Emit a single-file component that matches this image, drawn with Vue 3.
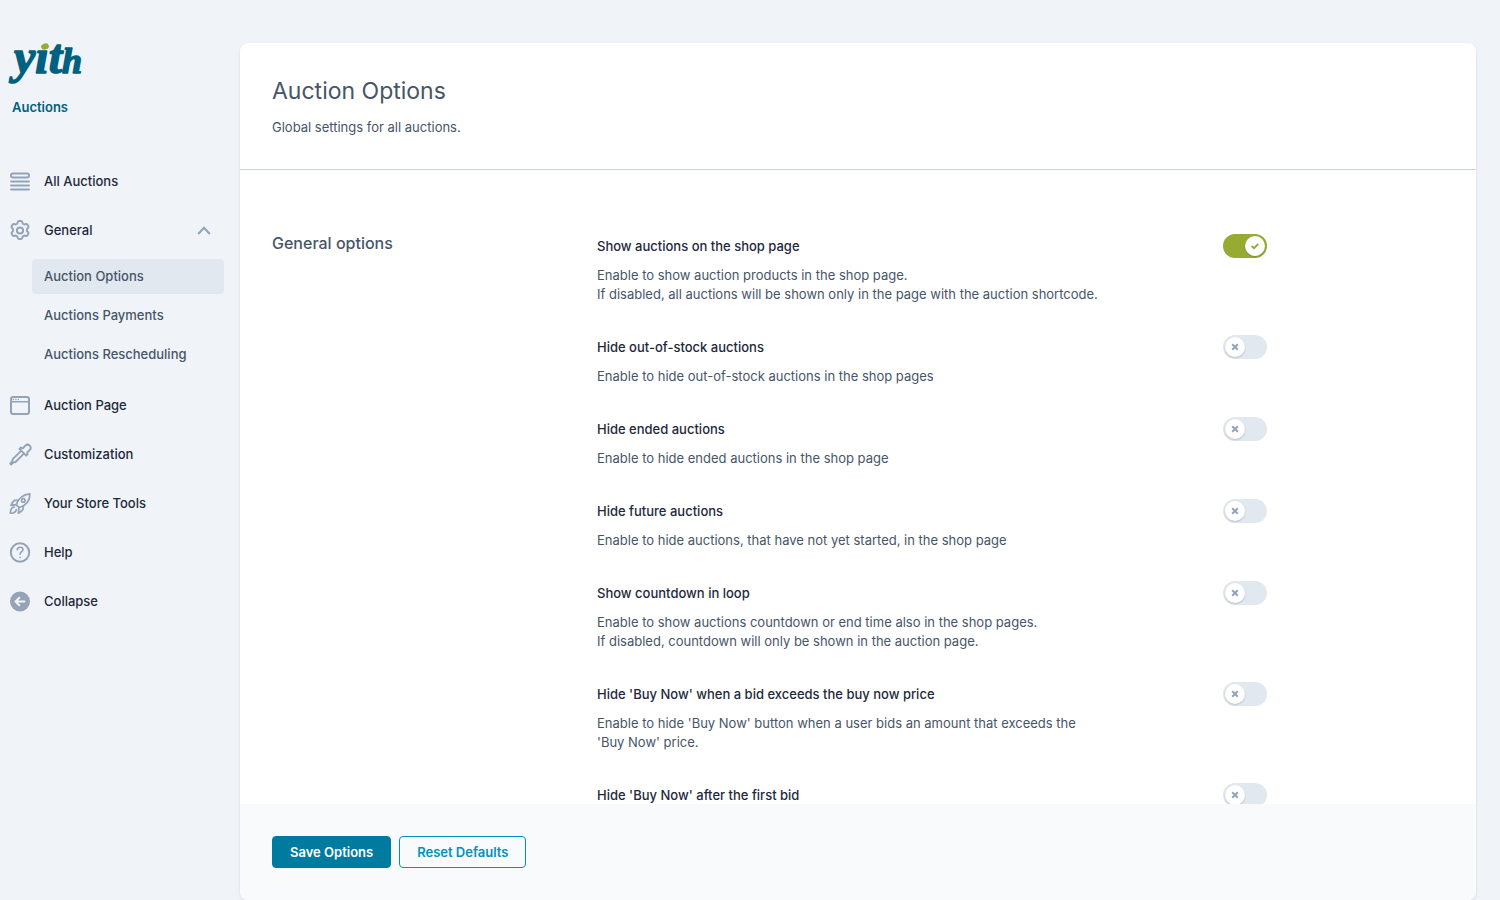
<script setup>
import { ref } from 'vue'

const generalOpen = ref(true)
const activeSub = ref('Auction Options')

const subItems = ['Auction Options', 'Auctions Payments', 'Auctions Rescheduling']

const menu = [
  { id: 'list', label: 'All Auctions' },
  { id: 'gear', label: 'General', children: subItems },
  { id: 'window', label: 'Auction Page' },
  { id: 'dropper', label: 'Customization' },
  { id: 'rocket', label: 'Your Store Tools' },
  { id: 'help', label: 'Help' },
  { id: 'collapse', label: 'Collapse' }
]

function defaults() {
  return [
    {
      id: 'show-shop',
      label: 'Show auctions on the shop page',
      lines: [
        'Enable to show auction products in the shop page.',
        'If disabled, all auctions will be shown only in the page with the auction shortcode.'
      ],
      on: true
    },
    {
      id: 'hide-stock',
      label: 'Hide out-of-stock auctions',
      lines: ['Enable to hide out-of-stock auctions in the shop pages'],
      on: false
    },
    {
      id: 'hide-ended',
      label: 'Hide ended auctions',
      lines: ['Enable to hide ended auctions in the shop page'],
      on: false
    },
    {
      id: 'hide-future',
      label: 'Hide future auctions',
      lines: ['Enable to hide auctions, that have not yet started, in the shop page'],
      on: false
    },
    {
      id: 'countdown',
      label: 'Show countdown in loop',
      lines: [
        'Enable to show auctions countdown or end time also in the shop pages.',
        'If disabled, countdown will only be shown in the auction page.'
      ],
      on: false
    },
    {
      id: 'buy-now-price',
      label: "Hide 'Buy Now' when a bid exceeds the buy now price",
      lines: ["Enable to hide 'Buy Now' button when a user bids an amount that exceeds the 'Buy Now' price."],
      on: false
    },
    {
      id: 'buy-now-first',
      label: "Hide 'Buy Now' after the first bid",
      lines: [],
      on: false
    }
  ]
}

const options = ref(defaults())

function resetDefaults() {
  options.value = defaults()
}
</script>

<template>
  <div class="page">
    <aside class="sidebar">
      <div class="brand">
        <svg class="logo" width="72" height="48" viewBox="0 0 72 48" role="img" aria-label="yith">
          <text class="wordmark" x="2" y="30">yıt<tspan class="small">h</tspan></text>
          <ellipse cx="33" cy="3.500" rx="4" ry="3" transform="rotate(-20 33 3.500)" fill="#97ab33" />
        </svg>
        <div class="product">Auctions</div>
      </div>

      <nav>
        <template v-for="item in menu" :key="item.id">
          <a
            class="item"
            href="#"
            :aria-expanded="item.children ? generalOpen : undefined"
            @click.prevent="item.children && (generalOpen = !generalOpen)"
          >
            <svg class="icon" width="24" height="24" viewBox="0 0.5 24 24" fill="none" stroke="#94a3b8" stroke-width="2" stroke-linecap="round" stroke-linejoin="round">
              <g v-if="item.id === 'list'">
                <rect x="3" y="4" width="18" height="4" rx="2" />
                <path d="M3 12h18M3 16h18M3 20h18" stroke-width="1.800" />
              </g>
              <g v-else-if="item.id === 'gear'">
                <path d="M9.6 3.9c.2-.9.7-1.3 1.4-1.3h2c.7 0 1.2.4 1.4 1.3l.3 1.2c.6.2 1.1.5 1.6.9l1.2-.4c.9-.3 1.5-.1 1.8.5l1 1.7c.4.7.2 1.3-.4 1.8l-.9.8v2.2l.9.8c.6.6.8 1.2.4 1.8l-1 1.7c-.3.6-.9.8-1.8.5l-1.2-.4c-.5.4-1 .7-1.6.9l-.3 1.2c-.2.9-.7 1.300-1.400 1.300h-2c-.7 0-1.200-.4-1.400-1.300l-.3-1.200c-.6-.2-1.100-.5-1.600-.9l-1.200.4c-.9.3-1.500.1-1.800-.5l-1-1.700c-.4-.7-.2-1.300.4-1.800l.9-.8v-2.200l-.9-.8c-.6-.5-.8-1.100-.4-1.800l1-1.700c.3-.6.9-.8 1.800-.5l1.200.4c.5-.4 1-.7 1.600-.9z" />
                <circle cx="12" cy="12" r="3.1" />
              </g>
              <g v-else-if="item.id === 'window'">
                <rect x="3" y="3.500" width="18" height="17" rx="2.200" />
                <path d="M3 8.200h18" stroke-width="1.600" />
                <path d="M5.300 5.900h.1M7.800 5.900h.1M10.300 5.900h.1" stroke-width="1.500" />
              </g>
              <g v-else-if="item.id === 'dropper'" stroke-width="1.900">
                <path d="M14 5.700l1.200-.2 2.200-2.300a3 3 0 0 1 4.300 4.300l-2.300 2.200-.2 1.200.5.800-1.500 1.500-6.800-6.800 1.500-1.500z" />
                <path d="M13.100 8.300l-8.400 8.400-.5 2.300-2 2.200 .9.900 2.100-2 2.300-.6 8.400-8.400" />
              </g>
              <g v-else-if="item.id === 'rocket'" stroke-width="1.700">
                <path d="M8.200 13.200c2-5.800 6.300-10.300 13.700-10.900.2 7.100-4.600 11.900-10.800 13.900z" />
                <path d="M9.800 8.800H6.700c-1.500 1.100-3 3-3.700 5.100l5.200-.7M15.300 14.300l-.1 3.200c-1.100 1.900-2.600 3.300-4.800 4.100l.7-5.400" />
                <circle cx="15.300" cy="8.900" r="1.700" />
                <path d="M6.300 15.700c-2.300-.2-3.800 2.200-4.100 6 2.900.2 5.500-.9 6.200-3.700" />
              </g>
              <g v-else-if="item.id === 'help'">
                <circle cx="12" cy="12" r="9.200" />
                <path d="M9.200 9.300c.2-1.700 1.300-2.600 2.900-2.600 1.700 0 2.900 1 2.900 2.500 0 1.900-2.900 2.200-2.900 4.500" stroke-width="1.600" />
                <circle cx="12.100" cy="16.900" r=".5" stroke-width="1" />
              </g>
              <g v-else>
                <circle cx="12" cy="12" r="10" fill="#94a3b8" stroke="none" />
                <path d="M16.500 12h-8.700M11.300 8.300L7.500 12l3.800 3.700" stroke="#f0f4f8" stroke-width="2" />
              </g>
            </svg>
            <span>{{ item.label }}</span>
            <svg v-if="item.children" class="chevron" :class="{ closed: !generalOpen }" width="14" height="14" viewBox="0 0 14 14" fill="none" stroke="#94a3b8" stroke-width="2.200">
              <path d="M1.200 10L7 3.800l5.800 6.200" />
            </svg>
          </a>
          <div v-if="item.children && generalOpen" class="submenu">
            <a
              v-for="sub in item.children"
              :key="sub"
              class="subitem"
              :class="{ active: sub === activeSub }"
              href="#"
              @click.prevent="activeSub = sub"
            >{{ sub }}</a>
          </div>
        </template>
      </nav>
    </aside>

    <main class="panel">
      <header class="panel-head">
        <h1>Auction Options</h1>
        <p>Global settings for all auctions.</p>
      </header>

      <form class="form" @submit.prevent>
        <div class="content">
          <h2>General options</h2>
          <div class="options">
            <div v-for="opt in options" :key="opt.id" class="option">
              <div class="option-row">
                <label :for="opt.id">{{ opt.label }}</label>
                <span class="switch">
                  <input :id="opt.id" v-model="opt.on" type="checkbox" role="switch" />
                  <svg class="knob" :class="{ on: opt.on }" width="20" height="20" viewBox="0 0 20 20" fill="none">
                    <path v-if="opt.on" d="M6.700 10l2.300 2.100 4.200-4.100" stroke="#97ab33" stroke-width="2" />
                    <path v-else d="M7.200 7.200l5.600 5.600M12.800 7.200l-5.600 5.600" stroke="#94a3b8" stroke-width="2" />
                  </svg>
                </span>
              </div>
              <div v-if="opt.lines.length" class="desc">
                <div v-for="line in opt.lines" :key="line">{{ line }}</div>
              </div>
            </div>
          </div>
        </div>

        <footer class="actions">
          <button class="btn primary" type="submit">Save Options</button>
          <button class="btn" type="button" @click="resetDefaults">Reset Defaults</button>
        </footer>
      </form>
    </main>
  </div>
</template>

<style>
body {
  background: #f0f4f8;
}
</style>

<style scoped>
* {
  box-sizing: border-box;
}
.page {
  display: flex;
  height: 100vh;
  padding: 43px 24px 0 0;
  overflow: hidden;
  background: #f0f4f8;
  color: #475569;
  font-family: Inter, sans-serif;
  font-size: 13px;
  line-height: 19px;
}
.sidebar {
  flex: 0 0 240px;
}
.brand {
  height: 114px;
  padding-left: 12px;
}
.logo {
  display: block;
  overflow: visible;
}
.wordmark {
  font-family: "Liberation Serif", serif;
  font-size: 48px;
  font-weight: 700;
  font-style: italic;
  fill: #006080;
  stroke: #006080;
  stroke-width: 1.5px;
  stroke-linejoin: round;
}
.wordmark .small {
  font-size: 36px;
}
.product {
  margin-top: 7px;
  color: #006080;
  font-weight: 600;
}
.item {
  display: flex;
  align-items: center;
  gap: 12px;
  height: 49px;
  padding: 0 29px 0 8px;
  color: #1e293b;
  font-weight: 500;
  text-decoration: none;
}
.icon {
  flex: none;
}
.chevron {
  margin-left: auto;
}
.chevron.closed {
  transform: rotate(180deg);
}
.submenu {
  display: flex;
  flex-direction: column;
  gap: 4px;
  padding: 4px 16px 9px 32px;
}
.subitem {
  padding: 8px 12px;
  border-radius: 4px;
  color: #475569;
  font-weight: 500;
  text-decoration: none;
}
.subitem.active {
  background: #e2e8f0;
}
.panel {
  display: flex;
  flex: 1;
  flex-direction: column;
  min-width: 0;
  overflow: hidden;
  border-radius: 8px;
  background: #fff;
  box-shadow: 0 1px 3px rgba(15, 23, 42, 0.12);
}
.panel-head {
  padding: 32px;
  border-bottom: 1px solid #cbd5d9;
}
h1 {
  margin: 0 0 11px;
  font-size: 23px;
  font-weight: 400;
  line-height: 32px;
}
.panel-head p {
  margin: 0;
}
.form {
  display: flex;
  flex: 1;
  flex-direction: column;
  min-height: 0;
}
.content {
  display: grid;
  flex: 1;
  grid-template-columns: 325px minmax(0, 670px);
  align-content: start;
  min-height: 0;
  padding: 64px 32px 0;
  overflow-y: auto;
  scrollbar-width: none;
}
h2 {
  margin: 0;
  font-size: 16px;
  font-weight: 500;
  line-height: 19px;
}
.option {
  margin-bottom: 31px;
}
.option-row {
  display: flex;
  align-items: center;
  justify-content: space-between;
}
.option-row label {
  color: #1e293b;
  font-weight: 500;
}
.desc {
  max-width: 504px;
  margin-top: 8px;
}
.switch {
  position: relative;
  flex: none;
  width: 44px;
  height: 24px;
}
.switch input {
  display: block;
  width: 44px;
  height: 24px;
  margin: 0;
  appearance: none;
  border-radius: 12px;
  background: #e2e8f0;
  cursor: pointer;
}
.switch input:checked {
  background: #97ab33;
}
.knob {
  position: absolute;
  top: 2px;
  left: 2px;
  border-radius: 50%;
  background: #fff;
  box-shadow: 0 1px 2px rgba(15, 23, 42, 0.2);
  pointer-events: none;
}
.knob.on {
  left: 22px;
}
.actions {
  display: flex;
  gap: 8px;
  padding: 32px;
  background: #f8fafc;
}
.btn {
  height: 32px;
  padding: 0 17px;
  border: 1px solid #0490bf;
  border-radius: 4px;
  background: transparent;
  color: #0490bf;
  font-family: inherit;
  font-size: 13px;
  font-weight: 600;
  cursor: pointer;
}
.btn.primary {
  border-color: #007ba0;
  background: #007ba0;
  color: #fff;
}
</style>
